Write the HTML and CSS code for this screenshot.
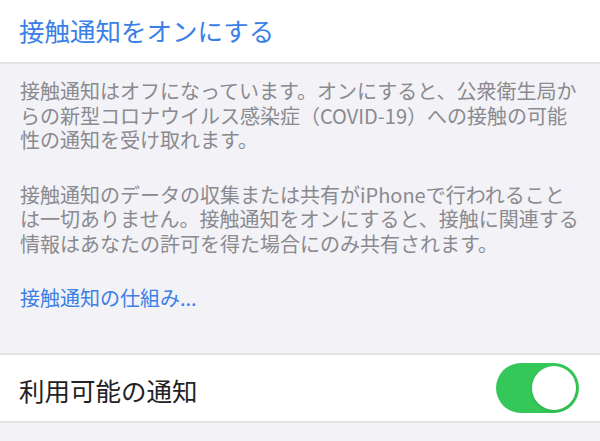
FILE: index.html
```html
<!DOCTYPE html>
<html lang="ja">
<head>
<meta charset="utf-8">
<link rel="stylesheet" href="styles.css">
</head>
<body>
<div class="screen">
  <div class="cell cell-top">
    <span class="action">接触通知をオンにする</span>
  </div>
  <div class="footer">
    <p class="note">接触通知はオフになっています。オンにすると、公衆衛生局か<br>らの新型コロナウイルス感染症（COVID-19）への接触の可能<br>性の通知を受け取れます。</p>
    <p class="note">接触通知のデータの収集または共有がiPhoneで行われること<br>は一切ありません。接触通知をオンにすると、接触に関連する<br>情報はあなたの許可を得た場合にのみ共有されます。</p>
    <p class="note link">接触通知の仕組み...</p>
  </div>
  <div class="cell cell-row">
    <span class="label">利用可能の通知</span>
    <span class="toggle"><span class="knob"></span></span>
  </div>
  <div class="rest"></div>
</div>
</body>
</html>
```

FILE: styles.css
```css
html, body {
  margin: 0;
  padding: 0;
  background: #f2f2f7;
}
.screen {
  width: 600px;
  height: 441px;
  overflow: hidden;
  font-family: "Noto Sans CJK JP", "Noto Sans", sans-serif;
  background: #f2f2f7;
}
.cell {
  background: #ffffff;
  display: flex;
  align-items: center;
  padding: 0 21px 0 19px;
  box-sizing: border-box;
}
.cell-top {
  height: 64px;
  border-bottom: 2px solid #e3e3e8;
}
.action {
  color: #3a80e6;
  font-size: 25.5px;
  line-height: 30px;
  margin-top: -2px;
}
.footer {
  padding: 15px 20px 42px 20px;
}
.note {
  margin: 0 0 30px 0;
  color: #8a8a8f;
  font-size: 20px;
  line-height: 24.5px;
  white-space: nowrap;
}
.note.link {
  margin: 0;
  color: #3a80e6;
}
.cell-row {
  height: 70px;
  border-top: 2px solid #e3e3e8;
  border-bottom: 2px solid #e3e3e8;
  justify-content: space-between;
}
.label {
  color: #222224;
  font-size: 25.5px;
  line-height: 30px;
  margin-top: 4px;
}
.toggle {
  width: 83px;
  height: 50px;
  border-radius: 25px;
  background: #34c759;
  display: flex;
  align-items: center;
  justify-content: flex-end;
  padding: 0 3px;
  box-sizing: border-box;
}
.knob {
  width: 44px;
  height: 44px;
  border-radius: 50%;
  background: #ffffff;
  box-shadow: 0 1px 3px rgba(0,0,0,0.15);
}
.rest {
  height: 20px;
}
```
